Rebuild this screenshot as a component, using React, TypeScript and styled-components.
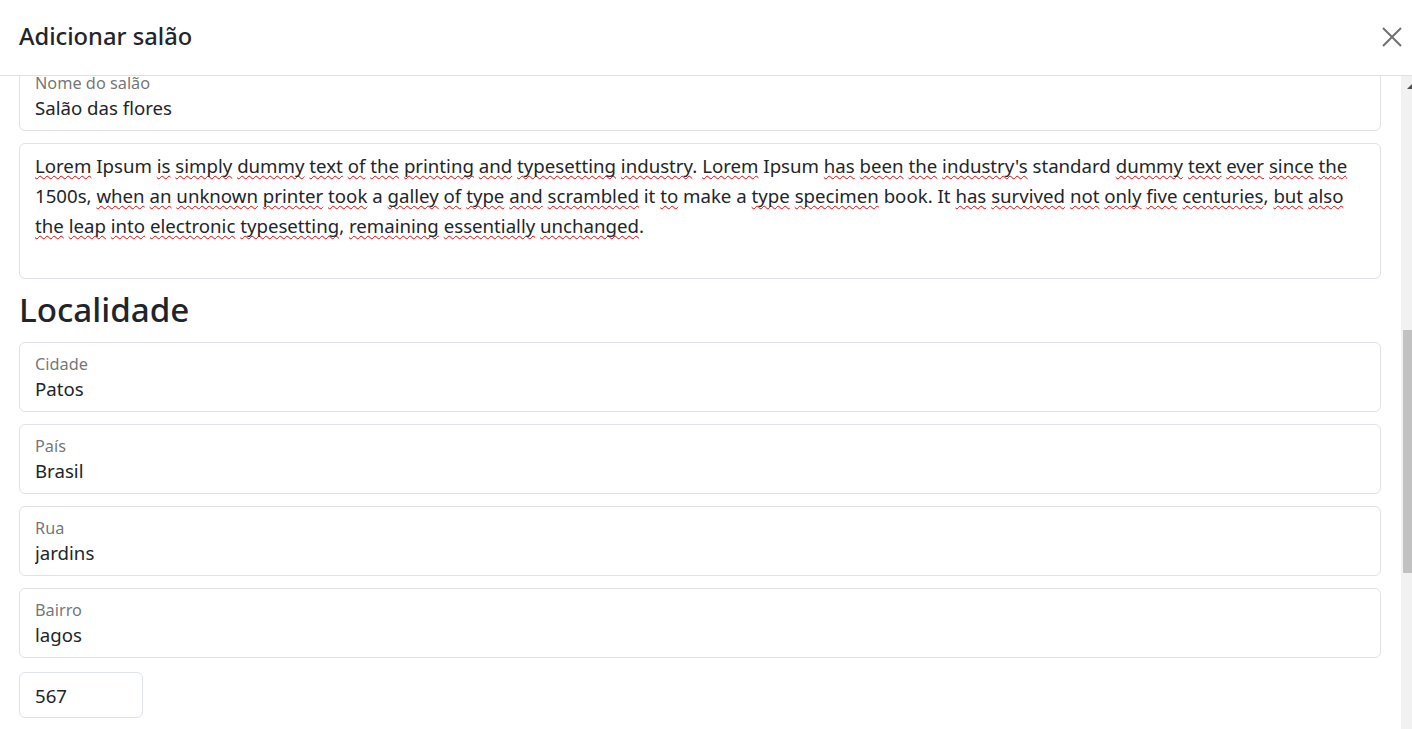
import React, { useLayoutEffect, useRef } from "react";
import styled, { createGlobalStyle } from "styled-components";

const GlobalStyle = createGlobalStyle`
  html, body {
    margin: 0;
    padding: 0;
    height: 100%;
    overflow: hidden;
    background: #ffffff;
  }
  body {
    font-family: "Noto Sans", "Open Sans", sans-serif;
    color: #212529;
  }
  #root {
    height: 100%;
  }
`;

const Modal = styled.div`
  display: flex;
  flex-direction: column;
  height: 100vh;
  background: #ffffff;
`;

const Header = styled.header`
  flex: 0 0 76px;
  box-sizing: border-box;
  display: flex;
  align-items: center;
  justify-content: space-between;
  padding: 0 10px 2px 19px;
  border-bottom: 1px solid #dee2e6;
`;

const Title = styled.h5`
  margin: 0;
  font-size: 23.7px;
  font-weight: 500;
  line-height: 1.5;
  color: #212529;
`;

const CloseButton = styled.button`
  width: 20px;
  height: 20px;
  padding: 0;
  border: 0;
  background: transparent;
  color: #707070;
  display: flex;
  align-items: center;
  justify-content: center;
  cursor: pointer;
`;

const Body = styled.div`
  flex: 1;
  min-height: 0;
  display: flex;
`;

const ScrollArea = styled.div`
  flex: 1;
  min-width: 0;
  overflow-y: auto;
  scrollbar-width: none;
  padding: 16px 20px 16px 19px;
  &::-webkit-scrollbar {
    display: none;
  }
`;

const FloatingField = styled.div`
  box-sizing: border-box;
  height: 70px;
  margin-bottom: 12px;
  padding: 14px 15px 0;
  border: 1px solid #dee2e6;
  border-radius: 6px;
  display: flex;
  flex-direction: column;
`;

const FieldLabel = styled.label`
  font-size: 16.3px;
  line-height: 14px;
  color: rgba(33, 37, 41, 0.65);
`;

const FieldInput = styled.input`
  height: 30px;
  margin-top: 3px;
  padding: 0;
  border: 0;
  outline: 0;
  background: transparent;
  font-family: inherit;
  font-size: 18.65px;
  line-height: 30px;
  color: #212529;
`;

const TextBox = styled.div`
  box-sizing: border-box;
  height: 136px;
  padding: 7px 15px;
  border: 1px solid #dee2e6;
  border-radius: 6px;
  font-size: 18.65px;
  line-height: 30px;
  color: #212529;
`;

const Misspelled = styled.span`
  text-decoration: underline wavy #f00000;
  text-decoration-thickness: 1px;
  text-underline-offset: 2px;
  text-decoration-skip-ink: none;
`;

const SectionTitle = styled.h2`
  margin: 11px 0 12px;
  font-size: 33.2px;
  font-weight: 500;
  line-height: 40px;
  color: #212529;
`;

const SmallInput = styled.input<{ $width: number }>`
  display: block;
  box-sizing: border-box;
  width: ${(p) => p.$width}px;
  height: 46px;
  margin-top: 14px;
  padding: 7px 15px;
  border: 1px solid #dee2e6;
  border-radius: 6px;
  outline: 0;
  font-family: inherit;
  font-size: 18.65px;
  line-height: 30px;
  color: #212529;
  background: #ffffff;
`;

const Track = styled.div`
  flex: 0 0 11px;
  overflow: hidden;
  background: #f1f1f1;
  display: flex;
  flex-direction: column;
`;

const ArrowUp = styled.span`
  flex-shrink: 0;
  width: 0;
  height: 0;
  margin: 8px 0 0 6px;
  border-left: 5px solid transparent;
  border-right: 5px solid transparent;
  border-bottom: 5px solid #505050;
`;

const Thumb = styled.span`
  flex-shrink: 0;
  height: 243px;
  margin: 241px 0 0 2px;
  background: #c1c1c1;
`;

const description =
  "Lorem Ipsum is simply dummy text of the printing and typesetting industry. Lorem Ipsum has been the industry's standard dummy text ever since the 1500s, when an unknown printer took a galley of type and scrambled it to make a type specimen book. It has survived not only five centuries, but also the leap into electronic typesetting, remaining essentially unchanged.";

const knownWords = new Set(["Ipsum", "standard", "1500s", "a", "it", "make", "book", "It"]);

function SpellText({ text }: { text: string }) {
  const parts = text.split(/([A-Za-z0-9']+)/);
  return (
    <>
      {parts.map((part, i) =>
        i % 2 === 1 && !knownWords.has(part) ? (
          <Misspelled key={i}>{part}</Misspelled>
        ) : (
          <React.Fragment key={i}>{part}</React.Fragment>
        )
      )}
    </>
  );
}

function Field({ label, value }: { label: string; value: string }) {
  return (
    <FloatingField>
      <FieldLabel>{label}</FieldLabel>
      <FieldInput defaultValue={value} spellCheck={false} />
    </FloatingField>
  );
}

function CloseIcon() {
  return (
    <svg width="20" height="20" viewBox="0 0 20 20" aria-hidden="true">
      <path d="M1 1 L19 19 M19 1 L1 19" stroke="currentColor" strokeWidth="2" fill="none" />
    </svg>
  );
}

export default function App() {
  const scrollRef = useRef<HTMLDivElement>(null);

  useLayoutEffect(() => {
    if (scrollRef.current) scrollRef.current.scrollTop = 31;
  }, []);

  return (
    <>
      <GlobalStyle />
      <Modal>
        <Header>
          <Title>Adicionar salão</Title>
          <CloseButton aria-label="Fechar">
            <CloseIcon />
          </CloseButton>
        </Header>
        <Body>
          <ScrollArea ref={scrollRef}>
            <Field label="Nome do salão" value="Salão das flores" />
            <TextBox role="textbox">
              <SpellText text={description} />
            </TextBox>
            <SectionTitle>Localidade</SectionTitle>
            <Field label="Cidade" value="Patos" />
            <Field label="País" value="Brasil" />
            <Field label="Rua" value="jardins" />
            <Field label="Bairro" value="lagos" />
            <SmallInput $width={124} defaultValue="567" spellCheck={false} />
          </ScrollArea>
          <Track>
            <ArrowUp />
            <Thumb />
          </Track>
        </Body>
      </Modal>
    </>
  );
}
